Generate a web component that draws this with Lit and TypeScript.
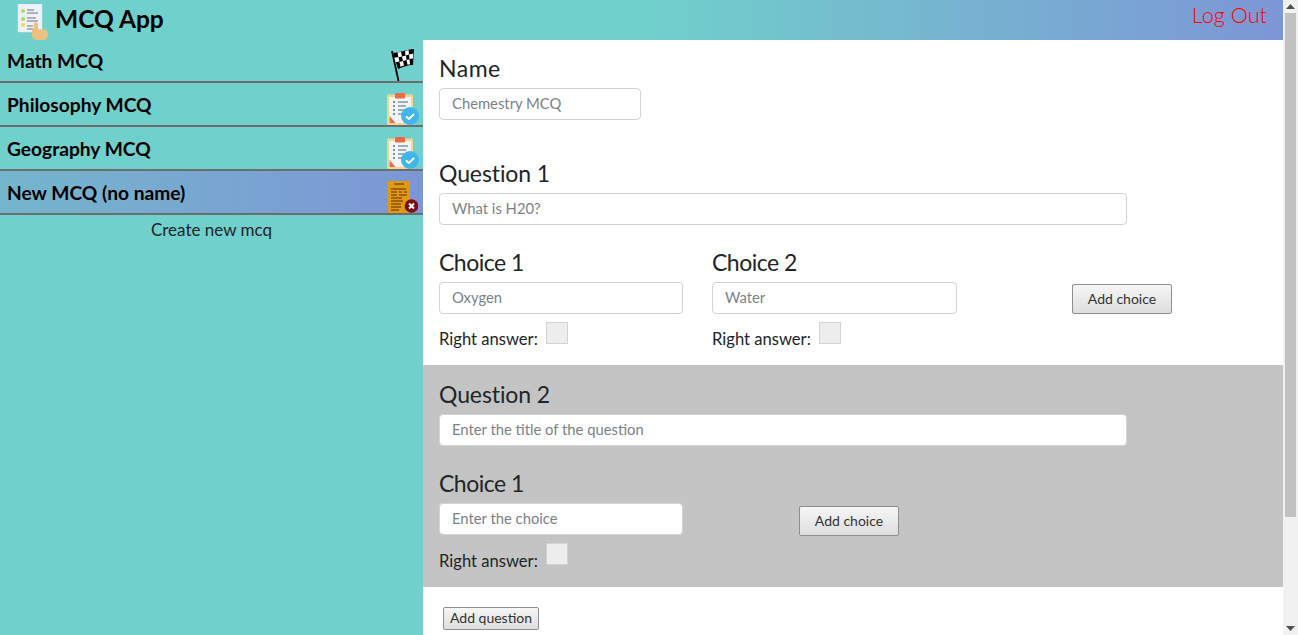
import { LitElement, html, css, svg } from "lit";
import { customElement } from "lit/decorators.js";

const logo = svg`<svg width="34" height="36" viewBox="0 0 34 36">
<rect x="1" y="0" width="24" height="28" fill="#eef0fa" stroke="#dfe2f2" stroke-width=".5"/>
<circle cx="6" cy="7" r="2" fill="#a5e05a"/><circle cx="6" cy="15" r="2" fill="#a5e05a"/><circle cx="6" cy="21" r="2" fill="#f5dc4a"/>
<path d="M10 6h7M10 9h11M10 14h9M10 17h11M10 22h6M10 25h6" stroke="#6d7480" stroke-width="1.2"/>
<path d="M17 20c0-2.500 4-2.500 4 0v5l6 .5c3 .5 4 2 4 4.500v1c0 3-2 5-5 5h-6c-3 0-5-2-5-5v-5c0-1.500 1-2 2-2z" fill="#eec07f"/>
</svg>`;

const flag = svg`<svg class="flag" width="24" height="32" viewBox="0 0 24 32">
<path d="M1 2l6.500 30" stroke="#000" stroke-width="1.800"/>
<path d="M2 4c6-1 7-1 11-2 3-1 6-2 10-2l-1 16c-6 0-9 2-15 4z" fill="#000"/>
<g fill="#fff"><path d="M6.500 3.500l3.500-.5 1 4.500-3.500.8z"/><path d="M14 2l3.500-1 .5 4.500-3.500 1z"/><path d="M3.500 8.800l4-.8 1 4.500-4 .8z"/><path d="M11 7.500l4-1 .5 4.500-3.500 1z"/><path d="M18 5.500l4.200-1-.2 5-3.500.5z"/><path d="M8.500 13l3.500-1 1 4.500-3.500 1.200z"/><path d="M15.500 11l3-.8.500 5-2.500.5z"/></g>
</svg>`;

const quiz = svg`<svg width="32" height="32" viewBox="0 0 32 32">
<rect x="0" y="1.500" width="26" height="30.500" rx="1.500" fill="#f4d68c"/>
<rect x="2" y="4" width="22" height="26" fill="#f3f4f5"/>
<path d="M2.500 23l6 7h-6z" fill="#ef6a4c"/>
<rect x="8" y="0" width="10" height="5.500" rx="1" fill="#f2694a"/>
<path d="M11 9h10M11 13h8M11 17h6M11 21h4" stroke="#7f97a8" stroke-width="1.600"/>
<path d="M6 9h2M6 13h2M6 17h2M6 21h2" stroke="#56707f" stroke-width="1.600"/>
<circle cx="23" cy="23" r="9" fill="#3fb6ee"/>
<path d="M19 23.500l3 2.500 5-5" fill="none" stroke="#fff" stroke-width="2"/>
</svg>`;

const draft = svg`<svg class="draft" width="30" height="32" viewBox="0 0 30 32">
<rect x="0" y="0" width="22" height="32" fill="#e19a0c"/>
<path d="M6 3h10M3 8h15M3 11h6M11 11h3M16 11h3M3 14h6M11 14h8M3 17h11M3 20h12M3 23h10M3 26h10M3 29h8" stroke="#8a5208" stroke-width="1.300"/>
<circle cx="23.500" cy="25" r="6.800" fill="#7e0c14"/>
<path d="M21 22.500l5 5M26 22.500l-5 5" stroke="#fff" stroke-width="2"/>
</svg>`;

@customElement("app-root")
export class AppRoot extends LitElement {
  static styles = css`
    :host { display: flex; width: 1298px; height: 635px; overflow: hidden; font-family: "Lato", "Noto Sans", sans-serif; color: #212529; background: #fff; }
    .page { width: 1283px; display: flex; flex-direction: column; }
    header { height: 40px; flex: none; display: flex; align-items: center; justify-content: space-between; background: linear-gradient(90deg, #70d0cb 0%, #70d0cb 50%, #7d96d6 100%); }
    .brand { display: flex; align-items: center; padding-left: 17px; gap: 4px; font-size: 24.500px; font-weight: 700; color: #000; }
    .brand svg { margin-top: 4px; }
    .brand span { margin-bottom: 4px; }
    .logout { font-size: 21.700px; font-weight: 300; color: #f00; padding: 0 16px 10px 0; }
    .body { flex: 1; display: flex; min-height: 0; }
    aside { width: 423px; flex: none; background: #70d0cb; display: flex; flex-direction: column; }
    .row { height: 44px; box-sizing: border-box; border-bottom: 2px solid #6a6e6e; display: flex; align-items: flex-end; justify-content: space-between; padding: 0 4px 0 7px; font-size: 19.200px; font-weight: 700; color: #000; }
    .row:first-child { height: 43px; }
    .row span { align-self: center; margin-top: 1px; }
    .row:first-child span { margin-top: 0; }
    .row .flag { margin-right: 4px; }
    .row .draft { margin-right: 1px; }
    .row.active { background: linear-gradient(90deg, #74b6cc 0%, #7d96d6 100%); }
    .create { text-align: center; font-size: 17px; margin-top: 5px; line-height: 20px; }
    main { flex: 1; display: flex; flex-direction: column; background: #fff; }
    .name { box-sizing: border-box; padding: 15px 16px 0; height: 104px; flex: none; }
    .big { display: block; font-size: 23px; line-height: 26px; margin-bottom: 7px; letter-spacing: -.1px; }
    .big.n { letter-spacing: .5px; }
    .big.c { letter-spacing: -.5px; }
    .box { display: block; box-sizing: border-box; height: 32px; border: 1px solid #ced4da; border-radius: 4px; background: #fff; padding: 0 12px 1px; font-size: 14.800px; color: #7b838a; line-height: 29px; }
    .w-name { width: 202px; }
    .w-q { width: 688px; }
    .w-c { width: 244px; }
    .w-c2 { width: 245px; }
    .q { box-sizing: border-box; flex: none; padding: 16px 16px 0; }
    .q.first { height: 221px; }
    .q.gray { height: 222px; background: #c4c4c4; }
    .choices { display: flex; margin-top: 24px; }
    .choice { flex: none; }
    .c1 { width: 273px; }
    .c2 { width: 360px; }
    .c-solo { width: 360px; }
    .answer { display: flex; align-items: flex-start; margin-top: 8px; font-size: 16.600px; line-height: 22px; }
    .answer span { margin-top: 7px; width: 107px; }
    .first .answer span { margin-top: 6px; }
    .check { width: 22px; height: 22px; box-sizing: border-box; background: #ededed; border: 1px solid #d3d3d3; }
    .btn { box-sizing: border-box; font: inherit; color: #333; border: 1px solid #8f8f8f; border-radius: 2px; background: linear-gradient(#f6f6f6, #dedede); padding: 0 0 2px; }
    .add-c { width: 100px; height: 30px; font-size: 14px; margin-top: 35px; }
    .gray .add-c { margin-top: 36px; }
    .foot { padding: 20px 20px 0; }
    .add-q { width: 96px; height: 23px; font-size: 14px; display: block; }
    .scroll { width: 15px; flex: none; background: #f1f1f1; display: flex; flex-direction: column; align-items: center; }
    .arrow { height: 13px; flex: none; display: flex; align-items: center; justify-content: center; }
    .thumb { width: 11px; height: 504px; flex: none; background: #c1c1c1; }
    .track { flex: 1; }
  `;

  private choice(title: string, value: string, cls: string, w: string) {
    return html`<div class="choice ${cls}">
      <label class="big c">${title}</label>
      <div class="box ${w}">${value}</div>
      <div class="answer"><span>Right answer:</span><div class="check"></div></div>
    </div>`;
  }

  render() {
    return html`
      <div class="page">
        <header>
          <div class="brand">${logo}<span>MCQ App</span></div>
          <div class="logout">Log Out</div>
        </header>
        <div class="body">
          <aside>
            <div class="row"><span>Math MCQ</span>${flag}</div>
            <div class="row"><span>Philosophy MCQ</span>${quiz}</div>
            <div class="row"><span>Geography MCQ</span>${quiz}</div>
            <div class="row active"><span>New MCQ (no name)</span>${draft}</div>
            <div class="create">Create new mcq</div>
          </aside>
          <main>
            <div class="name">
              <label class="big n">Name</label>
              <div class="box w-name">Chemestry MCQ</div>
            </div>
            <div class="q first">
              <label class="big">Question 1</label>
              <div class="box w-q">What is H20?</div>
              <div class="choices">
                ${this.choice("Choice 1", "Oxygen", "c1", "w-c")}
                ${this.choice("Choice 2", "Water", "c2", "w-c2")}
                <button class="btn add-c">Add choice</button>
              </div>
            </div>
            <div class="q gray">
              <label class="big">Question 2</label>
              <div class="box w-q">Enter the title of the question</div>
              <div class="choices">
                ${this.choice("Choice 1", "Enter the choice", "c-solo", "w-c")}
                <button class="btn add-c">Add choice</button>
              </div>
            </div>
            <div class="foot"><button class="btn add-q">Add question</button></div>
          </main>
        </div>
      </div>
      <div class="scroll">
        <div class="arrow"><svg width="9" height="5" viewBox="0 0 9 5"><path d="M4.500 0L9 5H0z" fill="#505050"/></svg></div>
        <div class="thumb"></div>
        <div class="track"></div>
        <div class="arrow"><svg width="9" height="5" viewBox="0 0 9 5"><path d="M4.500 5L9 0H0z" fill="#505050"/></svg></div>
      </div>
    `;
  }
}
